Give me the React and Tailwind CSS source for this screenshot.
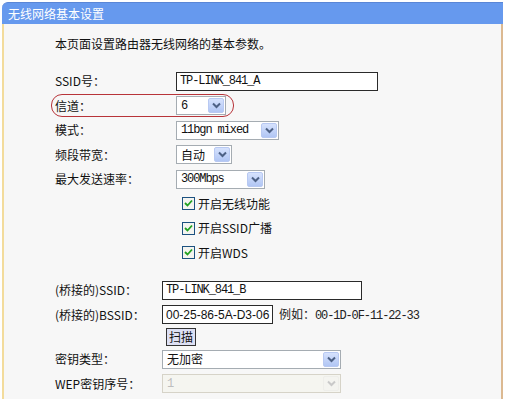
import React from 'react'

const latin = { fontFamily: '"Liberation Mono", "Noto Sans CJK SC", monospace' }
const cjk = { fontFamily: '"Noto Sans CJK SC", "Liberation Sans", sans-serif' }

function Chevron({ disabled }) {
  return (
    <svg width="9" height="7" viewBox="0 0 9 7">
      <path
        d="M1 1.5 L4.5 5 L8 1.5"
        fill="none"
        stroke={disabled ? '#c9c9c9' : '#4d6185'}
        strokeWidth="2"
      />
    </svg>
  )
}

function Select({ width, value, disabled, mono = true }) {
  return (
    <div
      className={`flex items-center h-[19px] border ${disabled ? 'border-[#d6d3c8] bg-[#f5f5f0]' : 'border-[#a5acb2] bg-white'}`}
      style={{ width }}
    >
      <span
        className={`flex-1 pl-[4px] leading-none ${disabled ? 'text-[#bdbdbd]' : 'text-[#111]'} ${mono ? 'text-[12px] tracking-[-1.1px]' : 'text-[12px]'}`}
        style={mono ? latin : cjk}
      >
        {value}
      </span>
      <span
        className={`mr-[1px] w-[16px] h-[15px] flex items-center justify-center rounded-[2px] border ${disabled ? 'border-[#eeeeea] bg-[#f4f4f0]' : 'border-[#b8c9f2] bg-gradient-to-b from-[#d6e2fd] to-[#b1c6f4]'}`}
      >
        <Chevron disabled={disabled} />
      </span>
    </div>
  )
}

function Input({ width, value, sans }) {
  return (
    <div
      className="flex items-center h-[19px] border border-[#2a2a2a] bg-white pl-[3px]"
      style={{ width }}
    >
      <span
        className={sans ? 'text-[12px] text-[#111] leading-none' : 'text-[12px] tracking-[-1.1px] text-[#111] leading-none'}
        style={sans ? { fontFamily: '"Liberation Sans", sans-serif' } : latin}
      >
        {value}
      </span>
    </div>
  )
}

function Check({ label }) {
  return (
    <div className="flex items-center h-[24.5px] pl-[174px]">
      <span className="ml-[4px] w-[13px] h-[13px] border border-[#1c5180] bg-[#f4f4f0] flex items-center justify-center">
        <svg width="9" height="9" viewBox="0 0 9 9">
          <path d="M1 4 L3.5 6.5 L8 1.5" fill="none" stroke="#21a121" strokeWidth="1.8" />
        </svg>
      </span>
      <span className="ml-[3px] text-[12px] text-[#111]" style={cjk}>
        {label}
      </span>
    </div>
  )
}

function Label({ children, w = 121 }) {
  return (
    <span className="shrink-0 text-[12px] text-[#111]" style={{ ...cjk, width: w }}>
      {children}
    </span>
  )
}

export default function App() {
  return (
    <div className="w-[505px] h-[399px] bg-white overflow-hidden" style={cjk}>
      <div className="ml-[2px] mr-[2px] mt-[2px] h-[397px] flex flex-col">
        <div className="h-[22px] rounded-tl-[6px] bg-[#6699ee] border-t border-[#5a86d6] flex items-center pl-[6px] text-white text-[12px]">
          无线网络基本设置
        </div>
        <div className="flex-1 bg-[#f7f7f7] border-l-2 border-[#f3dc9c] border-r-2 border-r-[#dcb991]">
          <div className="pl-[51px] pt-[13px]">
            <div className="text-[12px] text-[#111] leading-[14px]">本页面设置路由器无线网络的基本参数。</div>
          </div>
          <div className="mt-[18px]">
            <div className="flex items-center h-[24.5px] pl-[51px]">
              <Label>SSID号：</Label>
              <Input width={202} value="TP-LINK_841_A" />
            </div>
            <div className="relative flex items-center h-[24.5px] pl-[51px]">
              <span className="absolute left-[47px] top-[0px] w-[183px] h-[23px] border border-[#b8343a] rounded-[11px]" />
              <Label>信道：</Label>
              <Select width={50} value="6" />
            </div>
            <div className="flex items-center h-[24.5px] pl-[51px]">
              <Label>模式：</Label>
              <Select width={103} value="11bgn mixed" />
            </div>
            <div className="flex items-center h-[24.5px] pl-[51px]">
              <Label>频段带宽：</Label>
              <Select width={56} value="自动" mono={false} />
            </div>
            <div className="flex items-center h-[24.5px] pl-[51px]">
              <Label>最大发送速率：</Label>
              <Select width={89} value="300Mbps" />
            </div>
            <Check label="开启无线功能" />
            <Check label="开启SSID广播" />
            <Check label="开启WDS" />
          </div>
          <div className="mt-[13px]">
            <div className="flex items-center h-[24.5px] pl-[51px]">
              <Label w={107}>(桥接的)SSID：</Label>
              <Input width={200} value="TP-LINK_841_B" />
            </div>
            <div className="flex items-center h-[24.5px] pl-[51px]">
              <Label w={107}>(桥接的)BSSID：</Label>
              <Input width={111} value="00-25-86-5A-D3-06" sans />
              <span className="ml-[6px] text-[12px] text-[#222]" style={cjk}>
                例如：
                <span className="text-[12px] tracking-[-1.1px]" style={latin}>00-1D-0F-11-22-33</span>
              </span>
            </div>
            <div className="flex items-center h-[20px] pl-[160px]">
              <button className="ml-[2px] h-[18px] px-[2px] border border-[#333] bg-[#dde0f4] text-[12px] leading-none text-[#111]">
                扫描
              </button>
            </div>
            <div className="flex items-center h-[24px] pl-[51px]">
              <Label w={107}>密钥类型：</Label>
              <Select width={179} value="无加密" mono={false} />
            </div>
            <div className="flex items-center h-[25px] pl-[51px]">
              <Label w={107}>WEP密钥序号：</Label>
              <Select width={179} value="1" disabled />
            </div>
          </div>
        </div>
      </div>
    </div>
  )
}
